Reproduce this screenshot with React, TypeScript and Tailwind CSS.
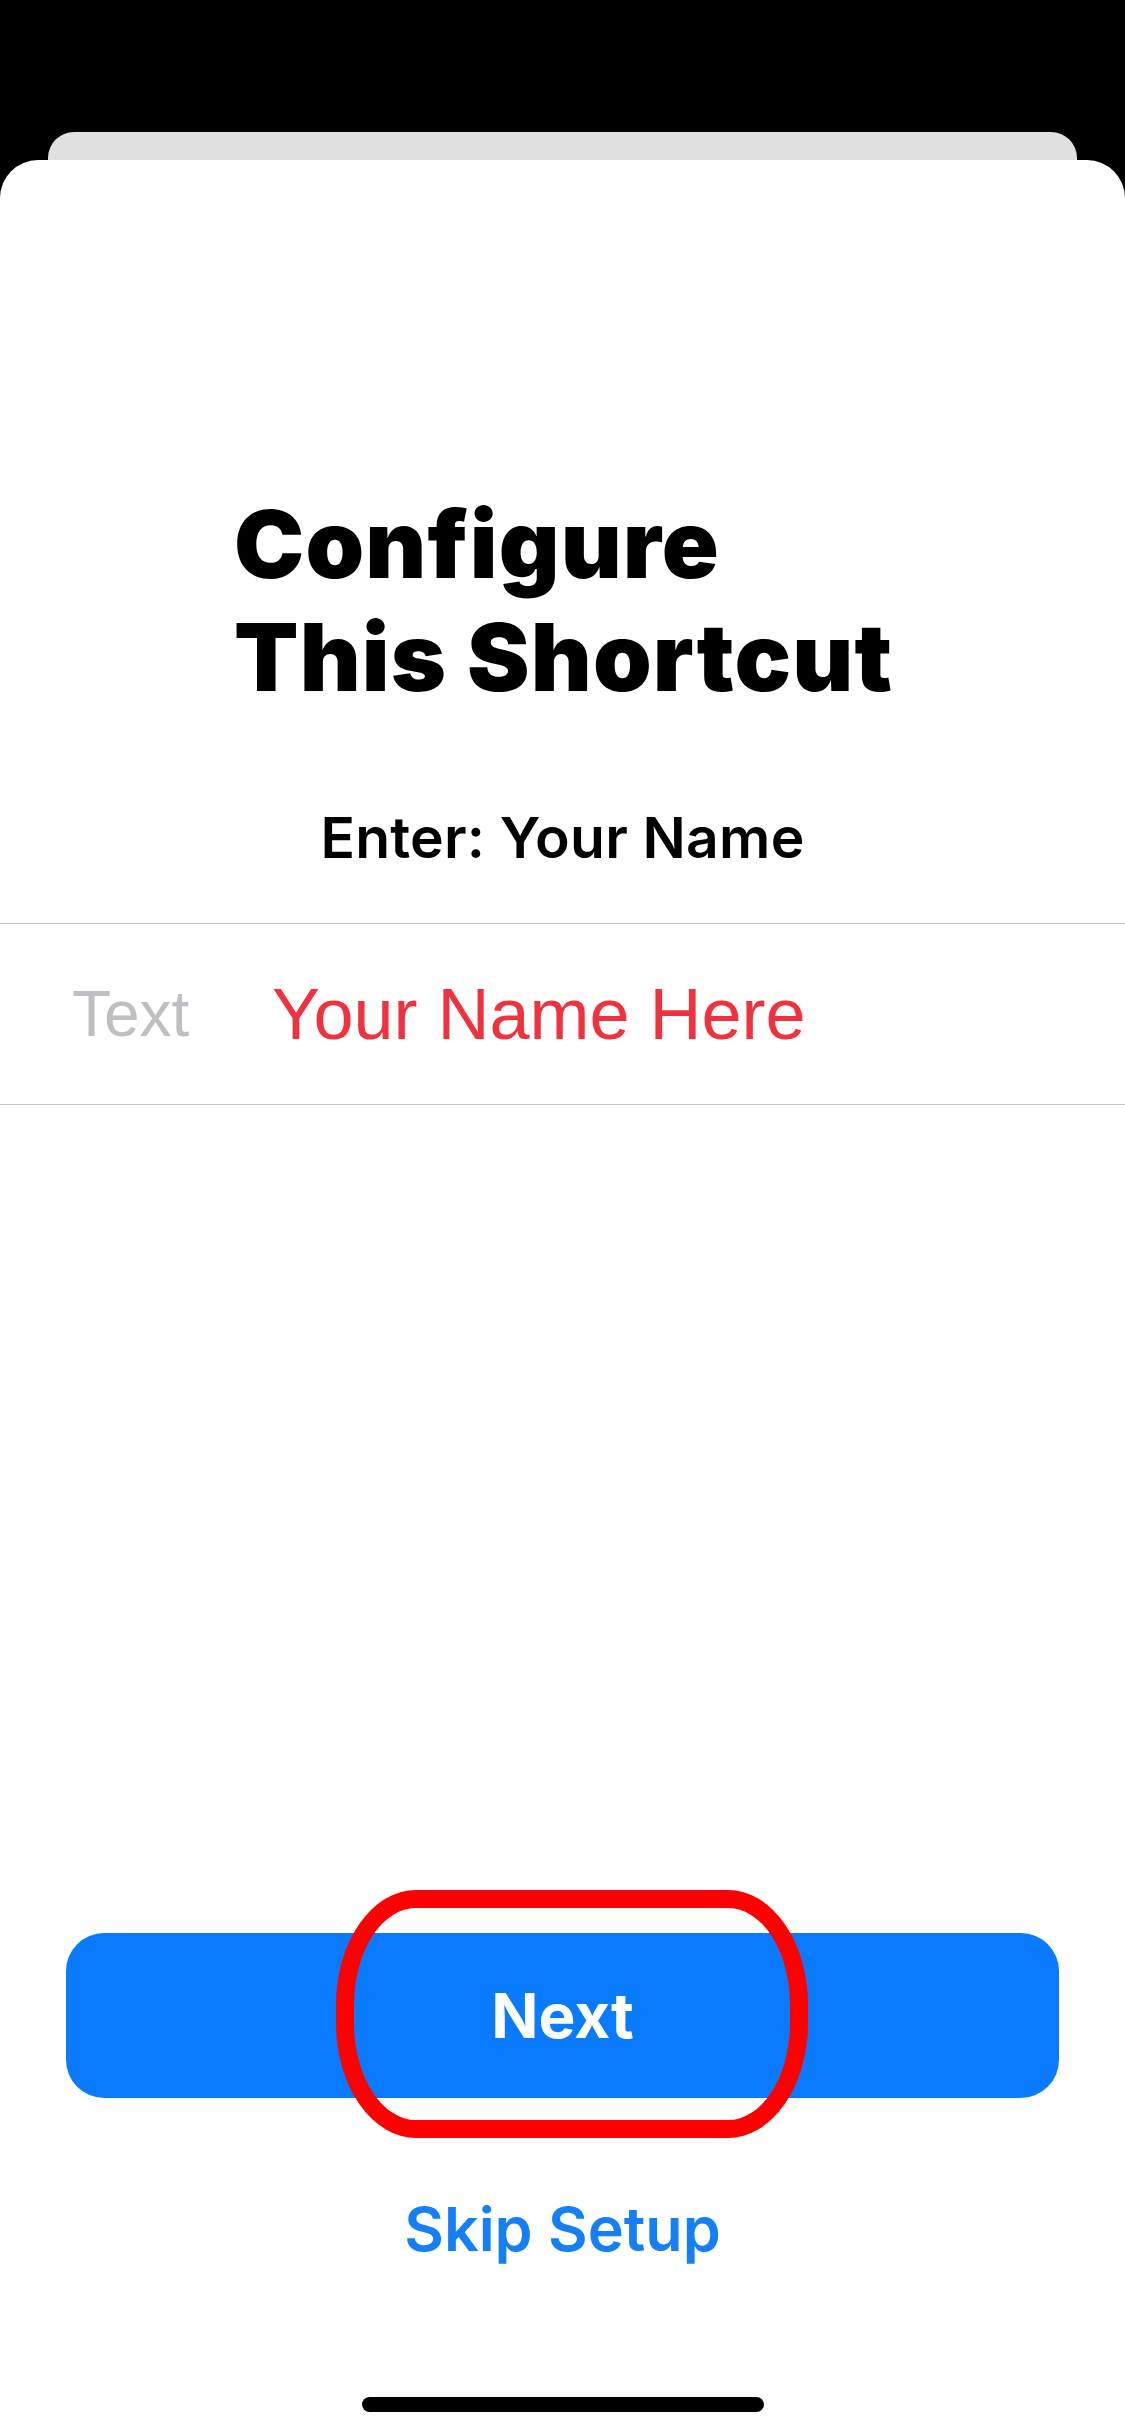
import React from "react";

const App: React.FC = () => {
  return (
    <div className="w-[1125px] h-[2436px] bg-black flex flex-col overflow-hidden">
      {/* card peeking behind the sheet */}
      <div className="mt-[132px] mx-[48px] h-[28px] rounded-t-[26px] bg-[#e0e0e0] shrink-0" />

      {/* sheet */}
      <div className="flex-1 bg-white rounded-t-[38px] flex flex-col">
        <div className="pt-[328px] pl-[234px] font-['Inter',sans-serif]">
          <h1 className="text-[94px] leading-[113px] font-black text-black tracking-[0.012em]">
            Configure
            <br />
            This Shortcut
          </h1>
        </div>

        <p className="mt-[90px] text-center font-['Inter',sans-serif] text-[57px] leading-[68px] font-semibold text-black tracking-[0.004em]">
          Enter: Your Name
        </p>

        {/* input row */}
        <div className="mt-[51px] h-[182px] border-y border-[#c8c8cc] flex items-center pl-[72px] font-['Liberation_Sans',Arial,sans-serif]">
          <span className="w-[200px] text-[64px] text-[#bfbfc3]">Text</span>
          <span className="text-[72px] text-[#f0323f]">Your Name Here</span>
        </div>

        <div className="flex-1" />

        {/* next button */}
        <div className="relative mx-[66px] h-[165px] rounded-[38px] bg-[#0a7bff] flex items-center justify-center">
          <span className="font-['Inter',sans-serif] text-[62px] font-bold text-white">Next</span>
          <div className="absolute left-[270px] top-[-43px] w-[472px] h-[248px] rounded-[80px/115px] border-[18px] border-[#ff0000]" />
        </div>

        <p className="mt-[94px] text-center font-['Inter',sans-serif] text-[61px] leading-[75px] font-semibold text-[#157ff7]">
          Skip Setup
        </p>

        <div className="mt-[130px] mb-[24px] mx-auto w-[402px] h-[15px] rounded-full bg-black" />
      </div>
    </div>
  );
};

export default App;
